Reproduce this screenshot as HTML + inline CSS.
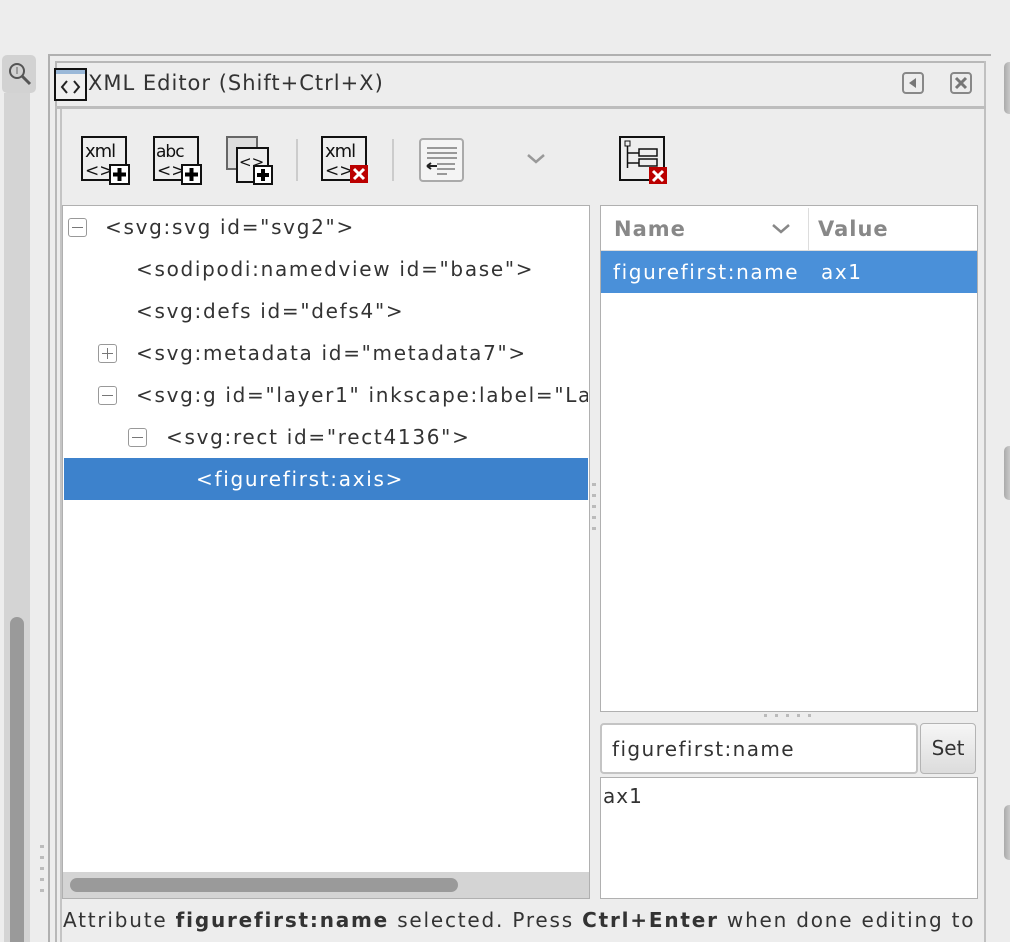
<!DOCTYPE html>
<html><head><meta charset="utf-8"><style>
*{margin:0;padding:0;box-sizing:border-box}
body{width:1010px;height:942px;background:#ededed;position:relative;overflow:hidden;font-family:"DejaVu Sans","Liberation Sans",sans-serif;color:#333}
.a{position:absolute}
.row{position:absolute;left:64px;width:524px;height:42px;font-size:20px;line-height:42px;white-space:nowrap;overflow:hidden;color:#333;letter-spacing:1.7px}
.exp{position:absolute;width:19px;height:19px;border:1px solid #999;border-radius:3px;top:12px}
.exp:before{content:"";position:absolute;left:3px;top:8px;width:11px;height:1px;background:#777}
.plus:after{content:"";position:absolute;left:8px;top:3px;width:1px;height:11px;background:#777}
</style></head><body>
<div class="a" style="left:2px;top:55px;width:34px;height:38px;background:#d2d2d2;border-radius:5px"></div>
<svg class="a" style="left:6px;top:60px" width="28" height="28"><circle cx="11" cy="11" r="7" fill="none" stroke="#555" stroke-width="2"/><line x1="16" y1="16" x2="24" y2="24" stroke="#555" stroke-width="3"/><line x1="11" y1="7" x2="11" y2="14" stroke="#666"/></svg>
<div class="a" style="left:4px;top:93px;width:26px;height:849px;background:#d4d4d4"></div>
<div class="a" style="left:10px;top:617px;width:14px;height:325px;background:#9a9a9a;border-radius:7px 7px 0 0"></div>
<div class="a" style="left:40px;top:845px;width:4px;height:48px;background:repeating-linear-gradient(#bbb 0 3px,transparent 3px 11px)"></div>
<div class="a" style="left:48px;top:54px;width:943px;height:2px;background:#b0b0b0"></div>
<div class="a" style="left:48px;top:54px;width:2px;height:888px;background:#b0b0b0"></div>
<div class="a" style="left:55px;top:61px;width:931px;height:2px;background:#b8b8b8"></div>
<div class="a" style="left:55px;top:61px;width:2px;height:881px;background:#b8b8b8"></div>
<div class="a" style="left:984px;top:61px;width:2px;height:881px;background:#c0c0c0"></div>
<div class="a" style="left:55px;top:106px;width:931px;height:3px;background:#bdbdbd"></div>
<div class="a" style="left:60px;top:109px;width:2px;height:833px;background:#c4c4c4"></div>
<div class="a" style="left:1004px;top:62px;width:10px;height:52px;background:linear-gradient(90deg,#aaa,#ddd);border-radius:5px 0 0 5px"></div>
<div class="a" style="left:1004px;top:446px;width:10px;height:54px;background:linear-gradient(90deg,#aaa,#ddd);border-radius:5px 0 0 5px"></div>
<div class="a" style="left:1004px;top:805px;width:10px;height:55px;background:linear-gradient(90deg,#aaa,#ddd);border-radius:5px 0 0 5px"></div>
<svg class="a" style="left:54px;top:68px" width="33" height="33"><rect x="1" y="1" width="31" height="31" fill="#f0f0f0" stroke="#111" stroke-width="2"/><rect x="2" y="2" width="29" height="4" fill="#9ab8d8"/><path d="M13 13 L8 19 L13 25 M20 13 L25 19 L20 25" fill="none" stroke="#222" stroke-width="2"/></svg>
<div class="a" style="left:88px;top:68px;font-size:21px;line-height:30px;color:#333;letter-spacing:1px;white-space:nowrap">XML Editor (Shift+Ctrl+X)</div>
<svg class="a" style="left:901px;top:71px" width="72" height="24"><rect x="2" y="2" width="20" height="20" rx="3" fill="none" stroke="#888" stroke-width="2"/><path d="M8 12 L15 7 L15 17Z" fill="#777"/><rect x="50" y="2" width="20" height="20" rx="3" fill="none" stroke="#888" stroke-width="2"/><path d="M55 7 L65 17 M65 7 L55 17" stroke="#777" stroke-width="3"/></svg>
<svg class="a" style="left:78px;top:133px" width="600" height="56" font-family="DejaVu Sans,sans-serif">
<g transform="translate(3,3)"><rect x="1" y="1" width="44" height="43" fill="#eee" stroke="#111" stroke-width="2"/><text x="4" y="21" font-size="18" fill="#111" letter-spacing="-1">xml</text><text x="4" y="40" font-size="17" fill="#111">&lt;&gt;</text><rect x="29" y="29" width="19" height="19" fill="#fff" stroke="#111" stroke-width="2"/><path d="M38.5 32v13M32 38.5h13" stroke="#000" stroke-width="4"/></g>
<g transform="translate(75,3)"><rect x="1" y="1" width="44" height="43" fill="#eee" stroke="#111" stroke-width="2"/><text x="3" y="21" font-size="17" fill="#111" letter-spacing="-1">abc</text><text x="4" y="40" font-size="17" fill="#111">&lt;&gt;</text><rect x="29" y="29" width="19" height="19" fill="#fff" stroke="#111" stroke-width="2"/><path d="M38.5 32v13M32 38.5h13" stroke="#000" stroke-width="4"/></g>
<g transform="translate(146,3)"><rect x="3" y="1" width="30" height="32" fill="#ddd" stroke="#666" stroke-width="2"/><rect x="13" y="12" width="31" height="34" fill="#eee" stroke="#111" stroke-width="2"/><text x="15" y="31" font-size="15" fill="#111">&lt;&gt;</text><rect x="30" y="30" width="18" height="18" fill="#fff" stroke="#111" stroke-width="2"/><path d="M39 33v12M33 39h12" stroke="#000" stroke-width="4"/></g>
<rect x="218" y="6" width="2" height="42" fill="#ccc"/>
<g transform="translate(243,3)"><rect x="1" y="1" width="44" height="43" fill="#eee" stroke="#111" stroke-width="2"/><text x="4" y="21" font-size="18" fill="#111" letter-spacing="-1">xml</text><text x="4" y="40" font-size="17" fill="#111">&lt;&gt;</text><rect x="29" y="29" width="18" height="18" fill="#b00"/><path d="M33 33l10 10M43 33l-10 10" stroke="#fff" stroke-width="3"/></g>
<rect x="314" y="6" width="2" height="42" fill="#ccc"/>
<g transform="translate(341,5)"><rect x="1" y="1" width="43" height="42" rx="3" fill="#f4f4f4" stroke="#aaa" stroke-width="2"/><path d="M8 10h30M8 15h30M8 20h30M18 26h18M18 31h18M18 36h10" stroke="#999" stroke-width="2"/><path d="M8 28h10M8 28l4-3M8 28l4 3" stroke="#222" stroke-width="2"/></g>
<path d="M450 22l8 7 8-7" fill="none" stroke="#999" stroke-width="2.5"/>
<g transform="translate(541,3)"><rect x="1" y="1" width="44" height="43" fill="#eee" stroke="#111" stroke-width="2"/><rect x="6" y="5" width="5" height="5" fill="none" stroke="#111"/><path d="M8.5 10v22M8.5 17h12M8.5 27h12" stroke="#111" stroke-width="1.5"/><rect x="20" y="13" width="18" height="7" fill="none" stroke="#111" stroke-width="1.5"/><rect x="20" y="23" width="18" height="7" fill="none" stroke="#111" stroke-width="1.5"/><rect x="30" y="31" width="18" height="17" fill="#b00"/><path d="M34 35l10 10M44 35l-10 10" stroke="#fff" stroke-width="3"/></g>
</svg>
<div class="a" style="left:62px;top:205px;width:528px;height:694px;background:#fff;border:1px solid #b0b0b0"></div>
<div class="row" style="top:206px"><div class="exp" style="left:4px"></div><span style="position:absolute;left:41px">&lt;svg:svg id="svg2"&gt;</span></div>
<div class="row" style="top:248px"><span style="position:absolute;left:72px">&lt;sodipodi:namedview id="base"&gt;</span></div>
<div class="row" style="top:290px"><span style="position:absolute;left:72px">&lt;svg:defs id="defs4"&gt;</span></div>
<div class="row" style="top:332px"><div class="exp plus" style="left:34px"></div><span style="position:absolute;left:72px">&lt;svg:metadata id="metadata7"&gt;</span></div>
<div class="row" style="top:374px"><div class="exp" style="left:34px"></div><span style="position:absolute;left:72px">&lt;svg:g id="layer1" inkscape:label="Layer 1"&gt;</span></div>
<div class="row" style="top:416px"><div class="exp" style="left:64px"></div><span style="position:absolute;left:102px">&lt;svg:rect id="rect4136"&gt;</span></div>
<div class="row" style="top:458px;background:#3d82cc;color:#fff"><span style="position:absolute;left:132px">&lt;figurefirst:axis&gt;</span></div>
<div class="a" style="left:63px;top:872px;width:526px;height:26px;background:#d4d4d4"></div>
<div class="a" style="left:70px;top:878px;width:388px;height:14px;background:#9a9a9a;border-radius:7px"></div>
<div class="a" style="left:592px;top:483px;width:4px;height:48px;background:repeating-linear-gradient(#bbb 0 3px,transparent 3px 11px)"></div>
<div class="a" style="left:600px;top:205px;width:378px;height:507px;background:#fff;border:1px solid #b0b0b0"></div>
<div class="a" style="left:601px;top:206px;width:376px;height:45px;border-bottom:1px solid #ddd;font-size:21px;font-weight:bold;color:#888;line-height:46px;letter-spacing:1px"><span style="position:absolute;left:13px">Name</span><svg class="a" style="left:170px;top:16px" width="20" height="14"><path d="M2 3l8 7 8-7" fill="none" stroke="#888" stroke-width="2.5"/></svg><div class="a" style="left:207px;top:2px;width:1px;height:42px;background:#ddd"></div><span style="position:absolute;left:217px">Value</span></div>
<div class="a" style="left:601px;top:251px;width:376px;height:42px;background:#4a90d9;color:#fff;font-size:20px;line-height:42px;letter-spacing:1.6px"><span style="position:absolute;left:12px">figurefirst:name</span><span style="position:absolute;left:220px">ax1</span></div>
<div class="a" style="left:764px;top:714px;width:48px;height:3px;background:repeating-linear-gradient(90deg,#bbb 0 3px,transparent 3px 11px)"></div>
<div class="a" style="left:600px;top:723px;width:318px;height:51px;background:#fff;border:2px solid #c4c4c4;border-radius:4px;font-size:20px;line-height:48px;padding-left:10px;color:#333;letter-spacing:1.4px">figurefirst:name</div>
<div class="a" style="left:920px;top:723px;width:56px;height:51px;background:linear-gradient(#f6f6f6,#dcdcdc);border:1px solid #b4b4b4;border-radius:4px;font-size:20px;line-height:49px;text-align:center;color:#333">Set</div>
<div class="a" style="left:600px;top:777px;width:378px;height:122px;background:#fff;border:1px solid #b0b0b0;font-size:20px;line-height:36px;padding-left:2px;color:#333;letter-spacing:1px">ax1</div>
<div class="a" style="left:63px;top:904px;width:910px;font-size:20px;line-height:32px;white-space:nowrap;overflow:hidden;color:#333;letter-spacing:1.8px">Attribute <b>figurefirst:name</b> selected. Press <b>Ctrl+Enter</b> when done editing to commit changes.</div>
</body></html>
